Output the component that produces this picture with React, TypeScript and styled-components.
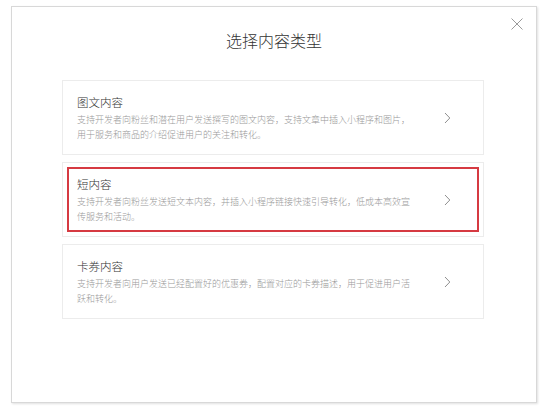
import React from 'react';
import styled, { createGlobalStyle } from 'styled-components';

interface ContentType {
  key: string;
  title: string;
  desc: string;
}

const types: ContentType[] = [
  {
    key: 'article',
    title: '图文内容',
    desc: '支持开发者向粉丝和潜在用户发送撰写的图文内容，支持文章中插入小程序和图片，用于服务和商品的介绍促进用户的关注和转化。',
  },
  {
    key: 'short',
    title: '短内容',
    desc: '支持开发者向粉丝发送短文本内容，并插入小程序链接快速引导转化，低成本高效宣传服务和活动。',
  },
  {
    key: 'coupon',
    title: '卡券内容',
    desc: '支持开发者向用户发送已经配置好的优惠券，配置对应的卡券描述，用于促进用户活跃和转化。',
  },
];

const App = () => {
  const selected = 'short';

  return (
    <>
      <GlobalStyle />
      <Page>
        <Modal>
          <CloseButton aria-label="关闭">
            <svg width="12" height="12" viewBox="0 0 12 12">
              <path d="M0.5 0.5 L11.5 11.5 M11.5 0.5 L0.5 11.5" stroke="#9a9a9a" strokeWidth="1" fill="none" />
            </svg>
          </CloseButton>
          <Title>选择内容类型</Title>
          <List>
            {types.map((t) => (
              <Card key={t.key}>
                <CardInner active={t.key === selected}>
                  <TextBlock>
                    <CardTitle>{t.title}</CardTitle>
                    <CardDesc>{t.desc}</CardDesc>
                  </TextBlock>
                  <svg width="7" height="12" viewBox="0 0 7 12">
                    <polyline points="1,1 5.8,6 1,11" stroke="#8f8f8f" strokeWidth="1" fill="none" />
                  </svg>
                </CardInner>
              </Card>
            ))}
          </List>
        </Modal>
      </Page>
    </>
  );
};

export default App;

const GlobalStyle = createGlobalStyle`
  body {
    margin: 0;
    background: #fff;
    font-family: "Noto Sans CJK SC", "Noto Sans", sans-serif;
  }
`;

const Page = styled.div`
  width: 557px;
  height: 408px;
  padding: 6px 0 0 11px;
  box-sizing: border-box;
`;

const Modal = styled.div`
  position: relative;
  width: 526px;
  height: 397px;
  box-sizing: border-box;
  border: 1px solid #d8d8d8;
  box-shadow: 1px 1px 2px rgba(0, 0, 0, 0.12);
  background: #fff;
  display: flex;
  flex-direction: column;
`;

const CloseButton = styled.button`
  position: absolute;
  top: 10px;
  right: 12px;
  width: 14px;
  height: 14px;
  padding: 0;
  border: none;
  background: none;
  display: flex;
  align-items: center;
  justify-content: center;
  cursor: pointer;
`;

const Title = styled.h2`
  margin: 22px 0 29px;
  text-align: center;
  font-size: 16px;
  line-height: 22px;
  font-weight: 300;
  color: #333;
`;

const List = styled.div`
  display: flex;
  flex-direction: column;
  gap: 7px;
  padding: 0 52px 0 50px;
`;

const Card = styled.div`
  height: 75px;
  box-sizing: border-box;
  border: 1px solid #ececec;
  padding: 4px;
  display: flex;
`;

const CardInner = styled.div<{ active: boolean }>`
  flex: 1;
  display: flex;
  align-items: center;
  justify-content: space-between;
  padding: 0 26px 0 8px;
  border: 2px solid ${({ active }) => (active ? '#d63a42' : 'transparent')};
`;

const TextBlock = styled.div`
  width: 338px;
`;

const CardTitle = styled.div`
  font-size: 11.5px;
  line-height: 16px;
  font-weight: 300;
  color: #333;
`;

const CardDesc = styled.div`
  margin-top: 2px;
  font-size: 9px;
  line-height: 15px;
  font-weight: 300;
  color: #999;
`;
